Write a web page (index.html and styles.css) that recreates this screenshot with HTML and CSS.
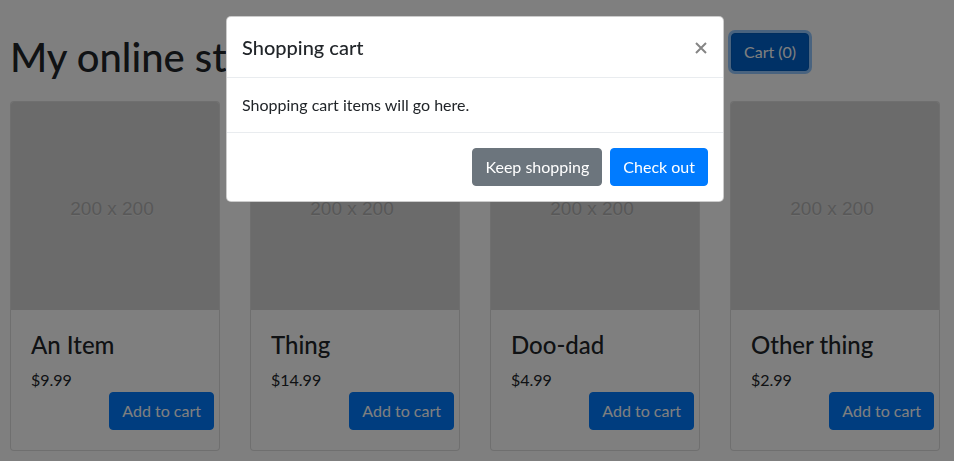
FILE: index.html
```html
<!DOCTYPE html>
<html lang="en">
<head>
<meta charset="utf-8">
<title>My online store</title>
<link rel="stylesheet" href="styles.css">
</head>
<body>
<div class="page">
  <header class="topbar">
    <h1 class="site-title">My online store</h1>
    <button class="btn btn-primary btn-active" type="button">Cart (0)</button>
  </header>
  <main class="card-grid">
    <div class="card">
      <div class="card-img"><span>200 x 200</span></div>
      <div class="card-body">
        <h4 class="card-title">An Item</h4>
        <p class="card-price">$9.99</p>
        <div class="card-actions"><button class="btn btn-primary" type="button">Add to cart</button></div>
      </div>
    </div>
    <div class="card">
      <div class="card-img"><span>200 x 200</span></div>
      <div class="card-body">
        <h4 class="card-title">Thing</h4>
        <p class="card-price">$14.99</p>
        <div class="card-actions"><button class="btn btn-primary" type="button">Add to cart</button></div>
      </div>
    </div>
    <div class="card">
      <div class="card-img"><span>200 x 200</span></div>
      <div class="card-body">
        <h4 class="card-title">Doo-dad</h4>
        <p class="card-price">$4.99</p>
        <div class="card-actions"><button class="btn btn-primary" type="button">Add to cart</button></div>
      </div>
    </div>
    <div class="card">
      <div class="card-img"><span>200 x 200</span></div>
      <div class="card-body">
        <h4 class="card-title">Other thing</h4>
        <p class="card-price">$2.99</p>
        <div class="card-actions"><button class="btn btn-primary" type="button">Add to cart</button></div>
      </div>
    </div>
  </main>
</div>

<div class="backdrop"></div>
<div class="modal" role="dialog">
  <div class="modal-header">
    <h5 class="modal-title">Shopping cart</h5>
    <button class="close" type="button" aria-label="Close">
      <svg width="12" height="12" viewBox="0 0 12 12"><path d="M1 1 L11 11 M11 1 L1 11" stroke="#858585" stroke-width="2" stroke-linecap="butt" fill="none"/></svg>
    </button>
  </div>
  <div class="modal-body">Shopping cart items will go here.</div>
  <div class="modal-footer">
    <button class="btn btn-secondary" type="button">Keep shopping</button>
    <button class="btn btn-primary" type="button">Check out</button>
  </div>
</div>
</body>
</html>
```

FILE: styles.css
```css
* { box-sizing: border-box; }

html, body {
  margin: 0;
  padding: 0;
  background: #fff;
  color: #212529;
  font-family: "Lato", "Noto Sans", "DejaVu Sans", sans-serif;
  font-size: 16px;
  line-height: 24px;
}

.page {
  padding: 33px 14px 0 10px;
}

.topbar {
  display: grid;
  grid-template-columns: repeat(4, 210px);
  column-gap: 30px;
  margin-bottom: 20px;
}

.site-title {
  grid-column: 1 / 4;
  margin: 0;
  font-size: 40px;
  line-height: 48px;
  font-weight: 500;
  white-space: nowrap;
}

.topbar .btn {
  grid-column: 4;
  justify-self: start;
  align-self: start;
  margin-left: 1px;
}

.btn {
  display: inline-block;
  font-family: inherit;
  font-size: 16px;
  line-height: 24px;
  padding: 6px 12px;
  border: 1px solid transparent;
  border-radius: 4px;
  color: #fff;
  cursor: pointer;
  white-space: nowrap;
}

.btn-primary { background: #007bff; border-color: #007bff; }
.btn-secondary { background: #6c757d; border-color: #6c757d; }
.btn-active {
  background: #0062cc;
  border-color: #005cbf;
  box-shadow: 0 0 0 3px rgba(38, 143, 255, 0.5);
}

.card-grid {
  display: grid;
  grid-template-columns: repeat(4, 210px);
  column-gap: 30px;
}

.card {
  border: 1px solid rgba(0, 0, 0, 0.125);
  border-radius: 4px;
  background: #fff;
  display: flex;
  flex-direction: column;
}

.card-img {
  height: 208px;
  background: #d6d6d6;
  border-radius: 3px 3px 0 0;
  display: flex;
  align-items: center;
  justify-content: center;
  padding: 6px 6px 0 0;
}

.card-img span {
  font-family: "Liberation Sans", Arial, sans-serif;
  font-size: 19px;
  color: #b0b0b0;
  text-shadow: 0 1px 1px rgba(255, 255, 255, 0.35);
}

.card-body {
  padding: 20px 5px 20px 20px;
}

.card-title {
  margin: 0 0 9px 0;
  font-size: 24px;
  line-height: 29px;
  font-weight: 500;
}

.card-price {
  margin: 0;
  line-height: 24px;
}

.card-actions {
  display: flex;
  justify-content: flex-end;
}

.backdrop {
  position: fixed;
  inset: 0;
  background: #000;
  opacity: 0.5;
}

.modal {
  position: fixed;
  top: 16px;
  left: 226px;
  width: 498px;
  background: #fff;
  border: 1px solid rgba(0, 0, 0, 0.2);
  border-radius: 5px;
}

.modal-header {
  display: flex;
  align-items: flex-start;
  padding: 15px;
  border-bottom: 1px solid #e9ecef;
}

.modal-title {
  margin: 0;
  font-size: 20px;
  line-height: 30px;
  font-weight: 500;
}

.close {
  margin-left: auto;
  margin-top: 10px;
  margin-right: 1px;
  padding: 0;
  border: 0;
  background: transparent;
  width: 12px;
  height: 12px;
  display: block;
  cursor: pointer;
}

.close svg { display: block; }

.modal-body {
  padding: 15px;
}

.modal-footer {
  display: flex;
  justify-content: flex-end;
  gap: 8px;
  padding: 15px;
  border-top: 1px solid #e9ecef;
}
```
